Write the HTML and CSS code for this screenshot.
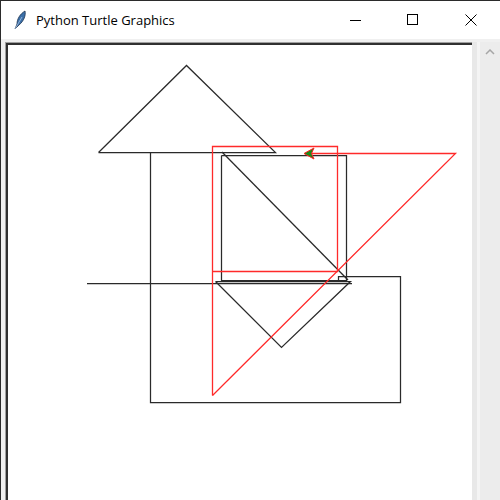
FILE: index.html
```html
<!DOCTYPE html>
<html>
<head>
<meta charset="utf-8">
<title>Python Turtle Graphics</title>
<link rel="stylesheet" href="styles.css">
</head>
<body>
<div class="window">
  <div class="titlebar">
    <div class="title-left">
      <svg class="app-icon" width="16" height="20" viewBox="0 0 16 20">
        <path d="M3 19 L5 14 C5 9 8 4 13 1 C14 5 12 11 7 15 Z" fill="#3b6fa8" stroke="#1f3550" stroke-width="0.8"/>
        <path d="M3 19 L10 7" stroke="#a9c4e4" stroke-width="0.8" fill="none"/>
      </svg>
      <span class="title">Python Turtle Graphics</span>
    </div>
    <div class="controls">
      <span class="ctl">
        <svg width="12" height="12" viewBox="0 0 12 12"><path d="M0 6.5 H11" stroke="#000" stroke-width="1"/></svg>
      </span>
      <span class="ctl">
        <svg width="12" height="12" viewBox="0 0 12 12"><rect x="0.5" y="0.5" width="10" height="10" fill="none" stroke="#000" stroke-width="1"/></svg>
      </span>
      <span class="ctl ctl-close">
        <svg width="12" height="12" viewBox="0 0 12 12"><path d="M0.5 0.5 L11.5 11.5 M11.5 0.5 L0.5 11.5" stroke="#000" stroke-width="1"/></svg>
      </span>
    </div>
  </div>
  <div class="body">
    <div class="frame">
      <div class="canvas">
        <svg class="drawing" width="464" height="455" viewBox="8 45 464 455">
          <g fill="none" stroke="#2a2a2a" stroke-width="1.25">
            <polyline points="98.5,152.5 186.5,65.5 275.5,152.5 98.5,152.5"/>
            <polyline points="150.5,152.5 150.5,402.5 400.5,402.5 400.5,276.5 338.5,276.5 338.5,280.5"/>
            <polyline points="221.5,155.5 346.5,155.5 346.5,280.5 221.5,280.5 221.5,155.5"/>
            <line x1="222" y1="152" x2="348" y2="280"/>
            <line x1="87" y1="283.5" x2="352" y2="283.5"/>
            <polyline points="215.5,281.5 281.5,347.5 350.5,281.5 215.5,281.5"/>
          </g>
          <g fill="none" stroke="#ff2a2a" stroke-width="1.3">
            <polyline points="212.5,395.5 212.5,146.5 337.5,146.5 337.5,271.5 212.5,271.5"/>
            <polyline points="212.5,395.5 455.5,153.5 305.5,153.5"/>
          </g>
          <polygon points="304,153.5 314,148 311.5,153.5 314,159" fill="#1a8a1a" stroke="#ff2020" stroke-width="1"/>
        </svg>
      </div>
    </div>
    <div class="gutter">
      <div class="band-a"></div>
      <div class="band-b"></div>
    </div>
    <div class="scrollbar">
      <svg class="arrow" width="10" height="6" viewBox="0 0 10 6">
        <path d="M1 5 L5 1 L9 5" fill="none" stroke="#a6a6a6" stroke-width="1.5"/>
      </svg>
    </div>
  </div>
</div>
</body>
</html>
```

FILE: styles.css
```css
html, body {
  margin: 0;
  padding: 0;
  width: 500px;
  height: 500px;
  overflow: hidden;
  background: #ffffff;
}

.window {
  width: 500px;
  height: 500px;
  box-sizing: border-box;
  border-top: 1px solid #2b2b2b;
  border-left: 1px solid #2b2b2b;
  display: flex;
  flex-direction: column;
  background: #f0f0f0;
}

.titlebar {
  height: 38px;
  flex: none;
  background: #ffffff;
  display: flex;
  align-items: center;
  justify-content: space-between;
}

.title-left {
  display: flex;
  align-items: center;
  padding-left: 11px;
}

.app-icon {
  display: block;
  margin-top: -1px;
}

.title {
  margin-left: 8px;
  font-family: "Open Sans", "Noto Sans", "Liberation Sans", sans-serif;
  font-size: 13px;
  color: #000000;
}

.controls {
  display: flex;
  height: 38px;
}

.ctl {
  width: 57px;
  display: flex;
  align-items: center;
  justify-content: center;
}

.ctl-close {
  width: 59px;
}

.body {
  flex: 1;
  display: flex;
  padding-top: 3px;
  padding-left: 4px;
  min-height: 0;
}

.frame {
  width: 467px;
  flex: none;
  box-sizing: border-box;
  border-top: 1px solid #a0a0a0;
  border-left: 1px solid #a0a0a0;
}

.canvas {
  height: 100%;
  box-sizing: border-box;
  border-top: 2px solid #303030;
  border-left: 2px solid #303030;
  background: #ffffff;
  overflow: hidden;
}

.drawing {
  display: block;
}

.gutter {
  width: 8px;
  flex: none;
  display: flex;
}

.band-a {
  width: 5px;
  background: #e8e8e8;
}

.band-b {
  width: 3px;
  background: #f4f4f4;
}

.scrollbar {
  width: 20px;
  flex: none;
  background: #ececec;
  display: flex;
  justify-content: center;
  align-items: flex-start;
  padding-top: 7px;
  box-sizing: border-box;
}

.arrow {
  display: block;
  margin-left: -1px;
}
```
